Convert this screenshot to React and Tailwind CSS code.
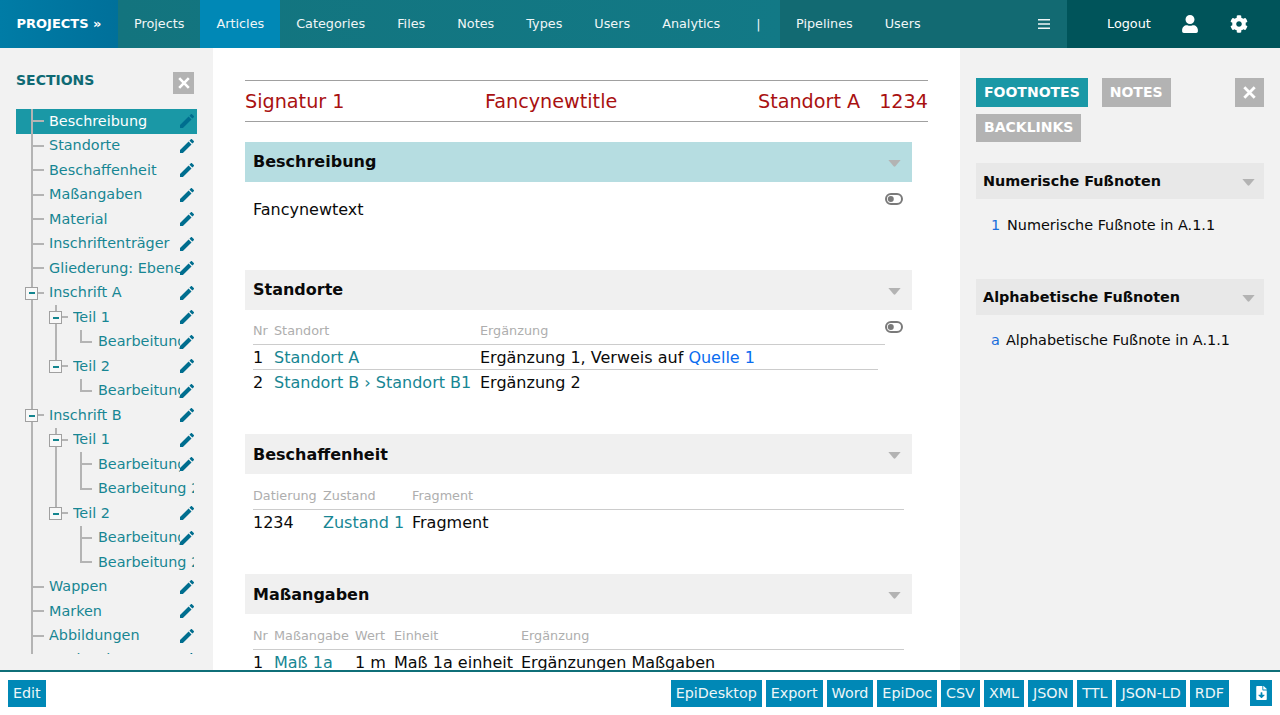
import React from "react";

const F = "font-['DejaVu_Sans',sans-serif]";

const Pen = () => (
  <svg viewBox="3 3 18 18" className="-mt-px h-[14px] w-[14px] shrink-0 fill-[#006e8f]">
    <path d="M3 17.25V21h3.75L17.81 9.94l-3.75-3.75L3 17.25zM20.71 7.04c.39-.39.39-1.02 0-1.41l-2.34-2.34c-.39-.39-1.02-.39-1.41 0l-1.83 1.83 3.75 3.75 1.83-1.83z" />
  </svg>
);

const Caret = () => (
  <svg viewBox="0 0 14 8" className="mt-[2px] h-[7px] w-[13px] fill-[#b3b3b3]"><path d="M0 0h14L8 7.2a1.4 1.4 0 0 1-2 0z" /></svg>
);

const Toggle = () => (
  <svg viewBox="0 0 18 12" className="h-3 w-[18px]">
    <rect x="1" y="1" width="16" height="10" rx="5" fill="none" stroke="#7a7a7a" strokeWidth="2" />
    <circle cx="5.8" cy="6" r="3" fill="#7a7a7a" />
  </svg>
);

const X = ({ size = 12 }) => (
  <svg viewBox="0 0 12 12" width={size} height={size} className="stroke-white" strokeWidth="2.6"><path d="M1.2 1.2l9.6 9.6M10.8 1.2l-9.6 9.6" /></svg>
);

const tree = [
  { t: "Beschreibung", l: 0, active: true },
  { t: "Standorte", l: 0 },
  { t: "Beschaffenheit", l: 0 },
  { t: "Maßangaben", l: 0 },
  { t: "Material", l: 0 },
  { t: "Inschriftenträger", l: 0 },
  { t: "Gliederung: Ebenen", l: 0 },
  { t: "Inschrift A", l: 0, box: true },
  { t: "Teil 1", l: 1, box: true, cont: true },
  { t: "Bearbeitung 1", l: 2, last: true, parentCont: true },
  { t: "Teil 2", l: 1, box: true, lastSub: true },
  { t: "Bearbeitung 1", l: 2, last: true },
  { t: "Inschrift B", l: 0, box: true },
  { t: "Teil 1", l: 1, box: true, cont: true },
  { t: "Bearbeitung 1", l: 2, parentCont: true },
  { t: "Bearbeitung 2", l: 2, last: true, parentCont: true, nopen: true },
  { t: "Teil 2", l: 1, box: true, lastSub: true },
  { t: "Bearbeitung 1", l: 2 },
  { t: "Bearbeitung 2", l: 2, last: true, nopen: true },
  { t: "Wappen", l: 0 },
  { t: "Marken", l: 0 },
  { t: "Abbildungen", l: 0 },
  { t: "Nachweise", l: 0, up: true },
];

const indent = ["pl-[33px]", "pl-[57px]", "pl-[82px]"];
const LINE = "bg-[#b4b4b4]";

const TreeRow = ({ r }) => (
  <div className={"relative flex h-[24.5px] items-center pr-[3px] " + indent[r.l] + (r.active ? " bg-[#1a98a6]" : "") + (r.up ? " pb-[1px]" : "")}>
    <span className={"absolute left-[15px] top-0 h-full w-[2px] " + LINE} />
    {r.l === 0 && <span className={"absolute left-[15px] top-[11px] h-[2px] w-[13px] " + LINE} />}
    {r.l === 1 && r.cont && <span className={"absolute left-[39px] top-0 h-full w-[2px] " + LINE} />}
    {r.l === 1 && r.lastSub && <span className={"absolute left-[39px] top-0 h-[12px] w-[2px] " + LINE} />}
    {r.l === 1 && <span className={"absolute left-[39px] top-[11px] h-[2px] w-[13px] " + LINE} />}
    {r.l === 2 && r.parentCont && <span className={"absolute left-[39px] top-0 h-full w-[2px] " + LINE} />}
    {r.l === 2 && <span className={"absolute left-[64px] top-0 w-[2px] " + LINE + " " + (r.last ? "h-[13px]" : "h-full")} />}
    {r.l === 2 && <span className={"absolute left-[64px] top-[11px] h-[2px] w-[12px] " + LINE} />}
    {r.box && (
      <span className={"absolute top-[6px] flex h-[13px] w-[13px] items-center justify-center border border-[#a0a0a0] bg-[#f8f8f8] " + (r.l === 0 ? "left-[9px]" : "left-[33px]")}>
        <span className="h-[2px] w-[6px] bg-[#14858f]" />
      </span>
    )}
    <span className={"min-w-0 flex-1 overflow-hidden whitespace-nowrap text-[14.4px] " + (r.active ? "text-white" : "text-[#178693]")}>{r.t}</span>
    {!r.nopen && <Pen />}
  </div>
);

const NavItem = ({ children, active, className = "" }) => (
  <div className={"flex h-full items-center px-4 text-[12.8px] text-[#f0f6f7] " + (active ? "bg-[#0088b6] " : "") + className}>{children}</div>
);

const Th = ({ children, className = "" }) => (
  <th className={"border-b border-[#cccccc] pb-[3px] pr-[7px] pt-px text-left text-[12.8px] font-normal leading-[20px] text-[#aeaeae] " + className}>{children}</th>
);
const Td = ({ children, className = "" }) => <td className={"whitespace-nowrap pr-[7px] pt-[2px] text-[16px] leading-[22px] text-[#0a0a0a] " + className}>{children}</td>;
const L = ({ children }) => <span className="text-[#178693]">{children}</span>;

const SectionHead = ({ children, active, shift }) => (
  <div className={"flex h-10 w-[667px] items-center justify-between pl-2 pr-[11px] text-[16px] font-bold text-[#0a0a0a] " + (active ? "bg-[#b6dde1]" : "bg-[#f0f0f0]")}>
    <span className={shift ? "mt-[2px]" : ""}>{children}</span>
    <Caret />
  </div>
);

const exportBtns = ["EpiDesktop", "Export", "Word", "EpiDoc", "CSV", "XML", "JSON", "TTL", "JSON-LD", "RDF"];
const Tab = ({ children, on, className = "h-[29px]" }) => (
  <span className={"flex items-center px-2 text-[14px] font-bold text-white " + className + " " + (on ? "bg-[#1a98a6]" : "bg-[#b3b3b3]")}>{children}</span>
);
const FootHead = ({ children }) => (
  <div className="flex h-9 w-[288px] items-center justify-between bg-[#e8e8e8] pl-[7px] pr-[9px] pt-px text-[14.4px] font-bold text-[#0a0a0a]">{children}<Caret /></div>
);
const Btn = ({ children }) => (
  <span className="flex h-[27px] items-center bg-[#0088b6] px-[5px] pt-px text-[14.3px] text-[#eef6f8]">{children}</span>
);

export default function App() {
  return (
    <div className={"flex h-[715px] w-[1280px] flex-col overflow-hidden bg-white " + F}>
      <header className="flex h-12 shrink-0">
        <div className="flex w-[118px] items-center justify-center bg-gradient-to-r from-[#007ca6] to-[#00709a] text-[13px] font-bold text-white">PROJECTS »</div>
        <div className="flex h-full w-[662px] items-center bg-gradient-to-r from-[#13747e] to-[#127986]">
          <NavItem>Projects</NavItem>
          <NavItem active>Articles</NavItem>
          <NavItem>Categories</NavItem>
          <NavItem>Files</NavItem>
          <NavItem>Notes</NavItem>
          <NavItem>Types</NavItem>
          <NavItem>Users</NavItem>
          <NavItem>Analytics</NavItem>
          <NavItem className="ml-1">|</NavItem>
        </div>
        <div className="flex h-full flex-1 items-center bg-[#126a72]">
          <NavItem>Pipelines</NavItem>
          <NavItem>Users</NavItem>
          <svg viewBox="0 0 12 10" className="ml-auto mr-[17px] h-[10px] w-[12px] fill-[#f0f6f7]"><path d="M0 0h12v1.6H0zM0 4.2h12v1.6H0zM0 8.4h12V10H0z" /></svg>
        </div>
        <div className="flex h-full w-[213px] items-center bg-[#00545a] text-white">
          <span className="ml-10 text-[12.8px]">Logout</span>
          <svg viewBox="0 0 448 512" className="ml-[31px] h-[18px] w-[16px] fill-white"><path d="M224 256c70.7 0 128-57.3 128-128S294.700 0 224 0 96 57.300 96 128s57.300 128 128 128zm89.600 32h-16.700c-22.200 10.200-46.900 16-72.900 16s-50.600-5.800-72.900-16h-16.700C60.200 288 0 348.200 0 422.400V464c0 26.500 21.500 48 48 48h352c26.500 0 48-21.500 48-48v-41.600c0-74.200-60.200-134.400-134.400-134.400z" /></svg>
          <svg viewBox="0 0 512 512" className="ml-[32px] h-[18px] w-[18px] fill-white"><path d="M487.400 315.700l-42.600-24.600c4.300-23.200 4.300-47 0-70.200l42.600-24.600c4.900-2.800 7.100-8.600 5.500-14-11.100-35.600-30-67.800-54.700-94.600-3.800-4.100-10-5.100-14.800-2.300L380.800 110c-17.900-15.400-38.500-27.300-60.800-35.100V25.800c0-5.600-3.900-10.500-9.400-11.700-36.700-8.200-74.300-7.800-109.200 0-5.500 1.200-9.400 6.100-9.400 11.700V75c-22.200 7.900-42.800 19.800-60.800 35.100L88.700 85.500c-4.900-2.800-11-1.900-14.800 2.300-24.700 26.700-43.600 58.900-54.700 94.600-1.700 5.400.6 11.200 5.500 14L67.300 221c-4.300 23.200-4.300 47 0 70.200l-42.600 24.600c-4.900 2.800-7.100 8.600-5.500 14 11.100 35.600 30 67.800 54.700 94.600 3.800 4.100 10 5.100 14.800 2.300l42.600-24.600c17.900 15.400 38.500 27.300 60.800 35.100v49.200c0 5.600 3.900 10.500 9.400 11.700 36.700 8.200 74.300 7.800 109.200 0 5.500-1.200 9.400-6.100 9.400-11.700v-49.200c22.200-7.900 42.800-19.800 60.800-35.100l42.600 24.600c4.900 2.800 11 1.900 14.800-2.300 24.700-26.700 43.600-58.900 54.700-94.600 1.500-5.500-.7-11.300-5.600-14.100zM256 336c-44.100 0-80-35.900-80-80s35.900-80 80-80 80 35.900 80 80-35.900 80-80 80z" /></svg>
        </div>
      </header>

      <div className="flex min-h-0 flex-1">
        <aside className="w-[213px] shrink-0 overflow-hidden bg-[#f2f2f2] pl-4 pt-6">
          <div className="flex h-[37.25px] w-[178px] items-start justify-between">
            <span className="text-[14px] font-bold leading-[17px] text-[#0f6a74]">SECTIONS</span>
            <span className="flex h-[22px] w-[21px] items-center justify-center bg-[#b3b3b3]"><X /></span>
          </div>
          <div className="h-[544.75px] w-[181px] overflow-hidden">
            {tree.map((r, i) => <TreeRow key={i} r={r} />)}
          </div>
        </aside>

        <main className="min-w-0 flex-1 overflow-hidden pl-8 pt-8">
          <div className="flex h-[42px] w-[683px] items-center border-y border-[#a0a0a0] pt-[2px] text-[19.2px] text-[#a91111]">
            <span className="w-[240px]">Signatur 1</span>
            <span className="flex-1">Fancynewtitle</span>
            <span>Standort A</span>
            <span className="ml-[19px]">1234</span>
          </div>

          <div className="mt-5"><SectionHead active>Beschreibung</SectionHead></div>
          <div className="relative h-[88px] pl-2 pt-[16px] text-[16px] leading-[24px] text-[#0a0a0a]">
            Fancynewtext
            <span className="absolute left-[640px] top-[11px]"><Toggle /></span>
          </div>

          <SectionHead>Standorte</SectionHead>
          <div className="relative h-[124px] pl-2 pt-[10px]">
            <span className="absolute left-[640px] top-[11px]"><Toggle /></span>
            <table className="w-[632px] table-fixed border-collapse">
              <thead>
                <tr>
                  <Th className="w-[21px]">Nr</Th><Th className="w-[206px]">Standort</Th><Th className="w-[398px]">Ergänzung</Th><Th className="w-[7px] pr-0" />
                </tr>
              </thead>
              <tbody>
                <tr>
                  <Td className="border-b border-[#cccccc]">1</Td>
                  <Td className="border-b border-[#cccccc]"><L>Standort A</L></Td>
                  <Td className="border-b border-[#cccccc] pr-0">Ergänzung 1, Verweis auf <span className="text-[#0a6cf0]">Quelle 1</span></Td>
                  <Td className="pr-0" />
                </tr>
                <tr><Td>2</Td><Td><L>Standort B › Standort B1</L></Td><Td className="pr-0">Ergänzung 2</Td><Td className="pr-0" /></tr>
              </tbody>
            </table>
          </div>

          <SectionHead shift>Beschaffenheit</SectionHead>
          <div className="h-[100px] pl-2 pt-[11px]">
            <table className="w-[651px] table-fixed border-collapse">
              <thead><tr><Th className="w-[70px]">Datierung</Th><Th className="w-[89px]">Zustand</Th><Th>Fragment</Th></tr></thead>
              <tbody><tr><Td>1234</Td><Td><L>Zustand 1</L></Td><Td>Fragment</Td></tr></tbody>
            </table>
          </div>

          <SectionHead shift>Maßangaben</SectionHead>
          <div className="pl-2 pt-[11px]">
            <table className="w-[651px] table-fixed border-collapse">
              <thead><tr><Th className="w-[21px]">Nr</Th><Th className="w-[81px]">Maßangabe</Th><Th className="w-[39px]">Wert</Th><Th className="w-[127px]">Einheit</Th><Th>Ergänzung</Th></tr></thead>
              <tbody><tr><Td>1</Td><Td><L>Maß 1a</L></Td><Td>1 m</Td><Td>Maß 1a einheit</Td><Td>Ergänzungen Maßgaben</Td></tr></tbody>
            </table>
          </div>
        </main>

        <aside className="w-[320px] shrink-0 overflow-hidden bg-[#f2f2f2] px-4 pt-[30px]">
          <div className="relative flex w-[288px] flex-wrap gap-x-[14px] gap-y-[7px] pr-10">
            <Tab on>FOOTNOTES</Tab>
            <Tab>NOTES</Tab>
            <Tab className="h-[28px] pb-px">BACKLINKS</Tab>
            <span className="absolute right-0 top-0 flex h-[29px] w-[29px] items-center justify-center bg-[#b3b3b3]"><X size={13} /></span>
          </div>
          <div className="mt-[21px]"><FootHead>Numerische Fußnoten</FootHead></div>
          <div className="flex h-[80px] pl-[15px] pt-[16px] text-[14.4px] leading-[20px] text-[#0a0a0a]"><span className="w-[16px] text-[#1a6fdc]">1</span>Numerische Fußnote in A.1.1</div>
          <FootHead>Alphabetische Fußnoten</FootHead>
          <div className="flex pl-[15px] pt-[15px] text-[14.4px] leading-[20px] text-[#0a0a0a]"><span className="w-[15px] text-[#1a6fdc]">a</span>Alphabetische Fußnote in A.1.1</div>
        </aside>
      </div>

      <footer className="flex h-[45px] shrink-0 items-start border-t-2 border-[#0f6f78] bg-white px-2 pt-2">
        <Btn>Edit</Btn>
        <div className="ml-auto flex gap-1">
          {exportBtns.map((b) => <Btn key={b}>{b}</Btn>)}
        </div>
        <span className="ml-[21px] flex h-[26px] w-[22px] items-center justify-center bg-[#0088b6]">
          <svg viewBox="0 0 384 512" className="h-[14px] w-[11px] fill-white"><path d="M224 136V0H24C10.700 0 0 10.700 0 24v464c0 13.300 10.700 24 24 24h336c13.300 0 24-10.700 24-24V160H248c-13.200 0-24-10.800-24-24zm76.450 211.360l-96.420 95.700c-6.650 6.610-17.390 6.610-24.040 0l-96.420-95.700C73.420 337.290 80.540 320 94.820 320H160v-80c0-8.840 7.160-16 16-16h32c8.840 0 16 7.160 16 16v80h65.180c14.280 0 21.400 17.290 11.270 27.360zM377 105L279.100 7c-4.500-4.500-10.600-7-17-7H256v128h128v-6.100c0-6.300-2.500-12.400-7-16.900z" /></svg>
        </span>
      </footer>
    </div>
  );
}
